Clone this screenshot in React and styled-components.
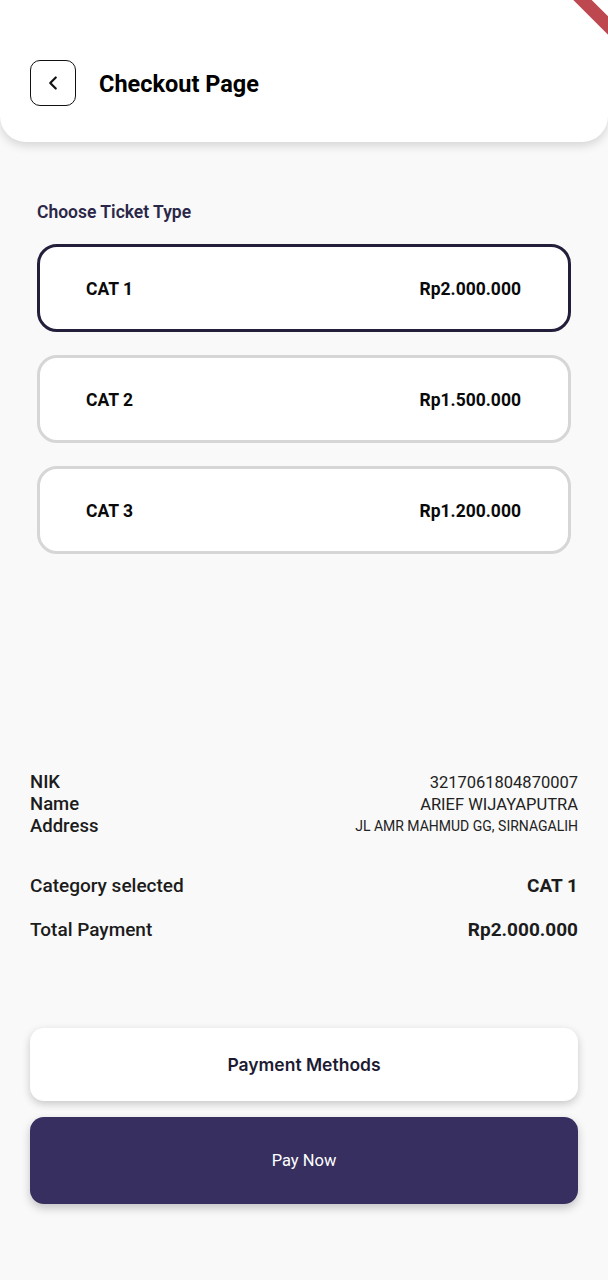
import React from "react";
import styled, { createGlobalStyle } from "styled-components";
import { ChevronLeft } from "lucide-react";

const Global = createGlobalStyle`
  html, body { margin: 0; padding: 0; background: #f9f9f9; }
  body { font-family: Roboto, "Liberation Sans", sans-serif; overflow: hidden; }
  * { box-sizing: border-box; }
`;

const Page = styled.div`
  position: relative;
  width: 608px;
  min-height: 1280px;
  background: #f9f9f9;
  overflow: hidden;
  display: flex;
  flex-direction: column;
`;

const Header = styled.header`
  background: #ffffff;
  height: 142px;
  padding: 60px 30px 0;
  border-radius: 0 0 26px 26px;
  box-shadow: 0 4px 10px rgba(0, 0, 0, 0.14);
  display: flex;
  align-items: flex-start;
  gap: 23px;
`;

const BackButton = styled.button`
  width: 46px;
  height: 46px;
  border: 1.5px solid #111;
  border-radius: 10px;
  background: #fff;
  display: flex;
  align-items: center;
  justify-content: center;
  padding: 0;
  color: #111;
`;

const Title = styled.h1`
  margin: 0;
  line-height: 48px;
  font-size: 23.5px;
  font-weight: 700;
  color: #000;
`;

const Banner = styled.div`
  position: absolute;
  top: -19px;
  right: -22px;
  width: 120px;
  height: 13px;
  background: rgba(178, 40, 48, 0.85);
  color: #fff;
  font-size: 9px;
  font-weight: 700;
  letter-spacing: 0.5px;
  display: flex;
  align-items: center;
  justify-content: center;
  transform: rotate(45deg);
`;

const Section = styled.section`
  padding: 0 37px;
  margin-top: 61px;
  display: flex;
  flex-direction: column;
`;

const SectionTitle = styled.h2`
  margin: 0 0 22px;
  font-size: 17.5px;
  line-height: 19px;
  font-weight: 600;
  color: #2b2748;
`;

const CardList = styled.div`
  display: flex;
  flex-direction: column;
  gap: 23px;
`;

const TicketCard = styled.div`
  height: 88px;
  background: #fff;
  border: 3px solid ${(p) => (p.$selected ? "#231f3b" : "#d6d6d6")};
  border-radius: 20px;
  padding: 2px 47px 0 46px;
  display: flex;
  align-items: center;
  justify-content: space-between;
  font-size: 17.5px;
  font-weight: 700;
  color: #0a0a0a;
`;

const Info = styled.div`
  margin-top: 217px;
  padding: 0 30px;
  display: flex;
  flex-direction: column;
`;

const IdentityRow = styled.div`
  display: flex;
  justify-content: space-between;
  align-items: center;
  height: 22px;
`;

const IdentityLabel = styled.span`
  font-size: 18.5px;
  font-weight: 500;
  color: #1c1c1c;
`;

const IdentityValue = styled.span`
  font-size: ${(p) => (p.$small ? "14px" : "16.5px")};
  font-weight: 400;
  color: #222;
`;

const SummaryRow = styled.div`
  display: flex;
  justify-content: space-between;
  align-items: center;
  height: 22px;
  margin-top: ${(p) => p.$mt}px;
`;

const SummaryLabel = styled.span`
  font-size: 19px;
  font-weight: 500;
  color: #1c1c1c;
`;

const SummaryValue = styled.span`
  font-size: 19px;
  font-weight: 700;
  color: #1c1c1c;
`;

const Actions = styled.div`
  margin-top: 88px;
  padding: 0 30px;
  display: flex;
  flex-direction: column;
  gap: 16px;
`;

const MethodsButton = styled.button`
  height: 73px;
  border: none;
  border-radius: 14px;
  background: #fff;
  box-shadow: 0 3px 8px rgba(0, 0, 0, 0.2);
  font-family: Inter, "Open Sans", sans-serif;
  font-size: 17.5px;
  font-weight: 600;
  color: #1d1b33;
`;

const PayButton = styled.button`
  height: 87px;
  border: none;
  border-radius: 14px;
  background: #372f60;
  box-shadow: 0 4px 10px rgba(0, 0, 0, 0.22);
  font-family: Roboto, "Liberation Sans", sans-serif;
  font-size: 16.5px;
  font-weight: 400;
  color: #fff;
`;

const tickets = [
  { name: "CAT 1", price: "Rp2.000.000", selected: true },
  { name: "CAT 2", price: "Rp1.500.000" },
  { name: "CAT 3", price: "Rp1.200.000" },
];

export default function App() {
  return (
    <Page>
      <Global />
      <Header>
        <BackButton aria-label="Back">
          <ChevronLeft size={22} strokeWidth={2.4} />
        </BackButton>
        <Title>Checkout Page</Title>
      </Header>
      <Banner>DEBUG</Banner>

      <Section>
        <SectionTitle>Choose Ticket Type</SectionTitle>
        <CardList>
          {tickets.map((t) => (
            <TicketCard key={t.name} $selected={t.selected}>
              <span>{t.name}</span>
              <span>{t.price}</span>
            </TicketCard>
          ))}
        </CardList>
      </Section>

      <Info>
        <IdentityRow>
          <IdentityLabel>NIK</IdentityLabel>
          <IdentityValue>3217061804870007</IdentityValue>
        </IdentityRow>
        <IdentityRow>
          <IdentityLabel>Name</IdentityLabel>
          <IdentityValue>ARIEF WIJAYAPUTRA</IdentityValue>
        </IdentityRow>
        <IdentityRow>
          <IdentityLabel>Address</IdentityLabel>
          <IdentityValue $small>JL AMR MAHMUD GG, SIRNAGALIH</IdentityValue>
        </IdentityRow>
        <SummaryRow $mt={37}>
          <SummaryLabel>Category selected</SummaryLabel>
          <SummaryValue>CAT 1</SummaryValue>
        </SummaryRow>
        <SummaryRow $mt={22}>
          <SummaryLabel>Total Payment</SummaryLabel>
          <SummaryValue>Rp2.000.000</SummaryValue>
        </SummaryRow>
      </Info>

      <Actions>
        <MethodsButton>Payment Methods</MethodsButton>
        <PayButton>Pay Now</PayButton>
      </Actions>
    </Page>
  );
}
